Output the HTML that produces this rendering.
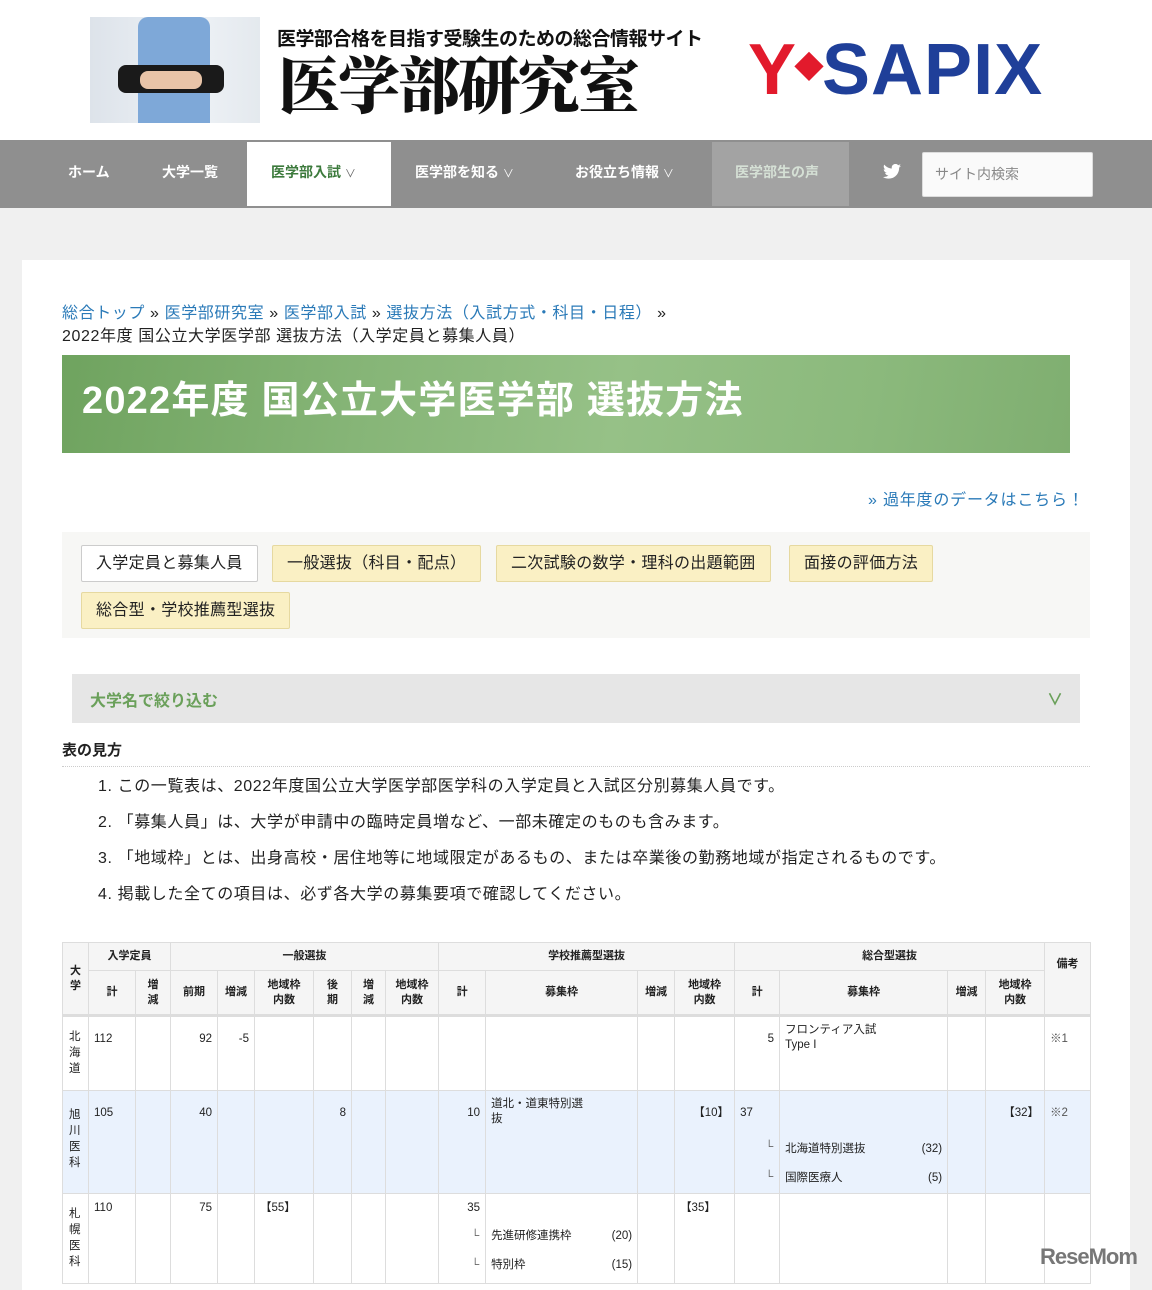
<!DOCTYPE html>
<html><head><meta charset="utf-8">
<style>
*{box-sizing:border-box;margin:0;padding:0}
body{width:1152px;height:1280px;overflow:hidden;background:#f0f0f0;font-family:"Liberation Sans","Noto Sans CJK JP",sans-serif;color:#222;position:relative}
.a{position:absolute}
#top{left:0;top:0;width:1152px;height:140px;background:#fff}
#nav{left:0;top:140px;width:1152px;height:68px;background:#8f8f8f}
.ni{position:absolute;top:0;height:68px;line-height:64px;color:#fff;font-weight:bold;font-size:14px}
#card{left:22px;top:260px;width:1108px;height:1030px;background:#fff}
.bc{font-size:16px;color:#222;letter-spacing:0.6px}
.bc a{color:#2a7ab8;text-decoration:none}
.tab{position:absolute;height:37px;line-height:35px;font-size:16px;padding:0 14px;border:1px solid #e6d9a0;background:#faf0c4;border-radius:2px;letter-spacing:0.3px}
table{border-collapse:collapse;table-layout:fixed;font-size:11.5px}
td,th{border:1px solid #ddd;vertical-align:top;padding:0 5px}
th{background:#f5f5f5;font-weight:bold;font-size:11px;text-align:center;vertical-align:middle;line-height:15px;padding:0 2px}
.r{text-align:right}
.hb td{border-top:3px solid #ddd}
.blue td{background:#eaf2fd}
.sub{font-size:11.5px;line-height:15px}
</style></head><body>
<div class="a" id="top">
 <div class="a" style="left:90px;top:17px;width:170px;height:106px;background:linear-gradient(90deg,#dde3ea,#eef2f6 60%,#e4e9ee)">
  <div class="a" style="left:48px;top:0;width:72px;height:106px;background:#7ea8d8;border-radius:10px 10px 0 0"></div>
  <div class="a" style="left:28px;top:48px;width:106px;height:28px;background:#1a1a1a;border-radius:8px"></div>
  <div class="a" style="left:50px;top:54px;width:62px;height:18px;background:#e8c4a8;border-radius:8px"></div>
 </div>
 <div class="a" style="left:277px;top:24px;font-size:19px;font-weight:bold;color:#111;letter-spacing:-0.5px">医学部合格を目指す受験生のための総合情報サイト</div>
 <div class="a" style="left:278px;top:46px;font-family:'Noto Serif CJK SC',serif;font-size:62px;font-weight:900;color:#111;line-height:72px;letter-spacing:-2px">医学部研究室</div>
 <div class="a" style="left:748px;top:30px;font-size:72px;font-weight:bold;line-height:78px;letter-spacing:-2px"><span style="color:#e21a2c">Y</span><span style="color:#e21a2c;font-size:30px;vertical-align:16px">◆</span><span style="color:#1f3f99;letter-spacing:1px">SAPIX</span></div>
</div>
<div class="a" id="nav">
 <div class="ni" style="left:68px">ホーム</div>
 <div class="ni" style="left:162px">大学一覧</div>
 <div class="a" style="left:247px;top:2px;width:144px;height:64px;background:#fff"></div>
 <div class="ni" style="left:271px;color:#3c7a3c">医学部入試 <span style="font-weight:normal;font-size:11px;color:#666">∨</span></div>
 <div class="ni" style="left:415px">医学部を知る <span style="font-weight:normal;font-size:11px">∨</span></div>
 <div class="ni" style="left:575px">お役立ち情報 <span style="font-weight:normal;font-size:11px">∨</span></div>
 <div class="a" style="left:712px;top:2px;width:137px;height:64px;background:#a3a3a3"></div>
 <div class="ni" style="left:735px;color:#d5e0d5">医学部生の声</div>
 <svg class="a" style="left:883px;top:24px" width="18" height="15" viewBox="0 0 24 20"><path fill="#fff" d="M24 2.4a10 10 0 0 1-2.8.8A5 5 0 0 0 23.3.4a10 10 0 0 1-3.1 1.2A4.9 4.9 0 0 0 11.8 6 14 14 0 0 1 1.7.9a4.9 4.9 0 0 0 1.5 6.6A4.9 4.9 0 0 1 1 6.9 4.9 4.9 0 0 0 4.9 11.8a5 5 0 0 1-2.2.1 4.9 4.9 0 0 0 4.6 3.4A9.9 9.9 0 0 1 0 17.3 14 14 0 0 0 7.5 19.5c9.1 0 14-7.5 14-14v-.6A10 10 0 0 0 24 2.4z"/></svg>
 <div class="a" style="left:922px;top:12px;width:171px;height:45px;background:#fafafa;border:1px solid #ddd;border-radius:2px;font-size:14px;color:#888;line-height:43px;padding-left:12px">サイト内検索</div>
</div>
<div class="a" id="card"></div>
<div class="a bc" style="left:62px;top:302px;line-height:23px"><a>総合トップ</a> » <a>医学部研究室</a> » <a>医学部入試</a> » <a>選抜方法（入試方式・科目・日程）</a> »<br>2022年度 国公立大学医学部 選抜方法（入学定員と募集人員）</div>
<div class="a" style="left:62px;top:355px;width:1008px;height:98px;background:linear-gradient(100deg,#6fa35f 0%,#86b577 30%,#96c187 55%,#8bb97c 80%,#7fae70 100%)">
 <div class="a" style="left:20px;top:22px;font-size:38px;font-weight:bold;color:#fff;line-height:48px;letter-spacing:1.2px">2022年度 国公立大学医学部 選抜方法</div>
</div>
<div class="a" style="left:868px;top:486px;font-size:16px;color:#2a7ab8;letter-spacing:0.8px">» 過年度のデータはこちら！</div>
<div class="a" style="left:62px;top:532px;width:1028px;height:106px;background:#f7f7f5"></div>
<div class="tab" style="left:81px;top:545px;background:#fff;border-color:#ccc">入学定員と募集人員</div>
<div class="tab" style="left:272px;top:545px">一般選抜（科目・配点）</div>
<div class="tab" style="left:496px;top:545px">二次試験の数学・理科の出題範囲</div>
<div class="tab" style="left:789px;top:545px">面接の評価方法</div>
<div class="tab" style="left:81px;top:592px">総合型・学校推薦型選抜</div>
<div class="a" style="left:72px;top:674px;width:1008px;height:49px;background:#e6e6e6">
 <div class="a" style="left:18px;top:13px;font-size:16px;font-weight:bold;color:#6aa05a">大学名で絞り込む</div>
 <div class="a" style="left:975px;top:12px;font-size:16px;color:#6aa05a;font-weight:bold">∨</div>
</div>
<div class="a" style="left:62px;top:739px;font-size:15px;font-weight:bold">表の見方</div>
<div class="a" style="left:62px;top:766px;width:1028px;border-top:1px dotted #ccc"></div>
<div class="a" style="left:98px;top:769px;font-size:16px;line-height:36px;letter-spacing:0.6px">1. この一覧表は、2022年度国公立大学医学部医学科の入学定員と入試区分別募集人員です。<br>2. 「募集人員」は、大学が申請中の臨時定員増など、一部未確定のものも含みます。<br>3. 「地域枠」とは、出身高校・居住地等に地域限定があるもの、または卒業後の勤務地域が指定されるものです。<br>4. 掲載した全ての項目は、必ず各大学の募集要項で確認してください。</div>
<table class="a" style="left:62px;top:942px;width:1028px">
<colgroup><col style="width:26px"><col style="width:47px"><col style="width:35px"><col style="width:47px"><col style="width:37px"><col style="width:59px"><col style="width:38px"><col style="width:34px"><col style="width:53px"><col style="width:47px"><col style="width:152px"><col style="width:37px"><col style="width:60px"><col style="width:45px"><col style="width:168px"><col style="width:38px"><col style="width:59px"><col style="width:46px"></colgroup>
<tr style="height:28px"><th rowspan="2">大<br>学</th><th colspan="2">入学定員</th><th colspan="6">一般選抜</th><th colspan="4">学校推薦型選抜</th><th colspan="4">総合型選抜</th><th rowspan="2" style="vertical-align:top;padding-top:14px">備考</th></tr>
<tr style="height:45px"><th>計</th><th>増<br>減</th><th>前期</th><th>増減</th><th>地域枠<br>内数</th><th>後<br>期</th><th>増<br>減</th><th>地域枠<br>内数</th><th>計</th><th>募集枠</th><th>増減</th><th>地域枠<br>内数</th><th>計</th><th>募集枠</th><th>増減</th><th>地域枠<br>内数</th></tr>
<tr class="hb" style="height:75px;line-height:16px"><td style="padding:12px 0 0 6px">北<br>海<br>道</td><td style="padding-top:14px">112</td><td></td><td class="r" style="padding-top:14px">92</td><td class="r" style="padding-top:14px">-5</td><td></td><td></td><td></td><td></td><td></td><td></td><td></td><td></td><td class="r" style="padding-top:14px">5</td><td class="sub" style="padding-top:6px">フロンティア入試<br>Type I</td><td></td><td></td><td style="padding-top:14px;color:#555">※1</td></tr>
<tr class="blue" style="height:103px;line-height:16px"><td style="padding:16px 0 0 6px">旭<br>川<br>医<br>科</td><td style="padding-top:14px">105</td><td></td><td class="r" style="padding-top:14px">40</td><td></td><td></td><td class="r" style="padding-top:14px">8</td><td></td><td></td><td class="r" style="padding-top:14px">10</td><td class="sub" style="padding-top:6px">道北・道東特別選<br>抜</td><td></td><td class="r" style="padding-top:14px">【10】</td><td style="padding-top:14px;position:relative">37<div class="a" style="left:30px;top:48px;color:#666">└</div><div class="a" style="left:30px;top:78px;color:#666">└</div></td><td class="sub" style="padding-top:44px;line-height:29px"><div style="display:flex;justify-content:space-between"><span>北海道特別選抜</span><span>(32)</span></div><div style="display:flex;justify-content:space-between"><span>国際医療人</span><span>(5)</span></div></td><td></td><td class="r" style="padding-top:14px">【32】</td><td style="padding-top:14px;color:#555">※2</td></tr>
<tr style="height:90px;line-height:16px"><td style="padding:12px 0 0 6px">札<br>幌<br>医<br>科</td><td style="padding-top:6px">110</td><td></td><td class="r" style="padding-top:6px">75</td><td></td><td style="padding-top:6px">【55】</td><td></td><td></td><td></td><td class="r" style="padding-top:6px;position:relative">35<div class="a" style="left:32px;top:34px;color:#666">└</div><div class="a" style="left:32px;top:63px;color:#666">└</div></td><td class="sub" style="padding-top:28px;line-height:29px"><div style="display:flex;justify-content:space-between"><span>先進研修連携枠</span><span>(20)</span></div><div style="display:flex;justify-content:space-between"><span>特別枠</span><span>(15)</span></div></td><td></td><td style="padding-top:6px">【35】</td><td></td><td></td><td></td><td></td><td></td></tr>
</table>
<div class="a" style="left:1040px;top:1244px;font-size:22px;font-weight:bold;color:#777;letter-spacing:-1px">ReseMom</div>
</body></html>
